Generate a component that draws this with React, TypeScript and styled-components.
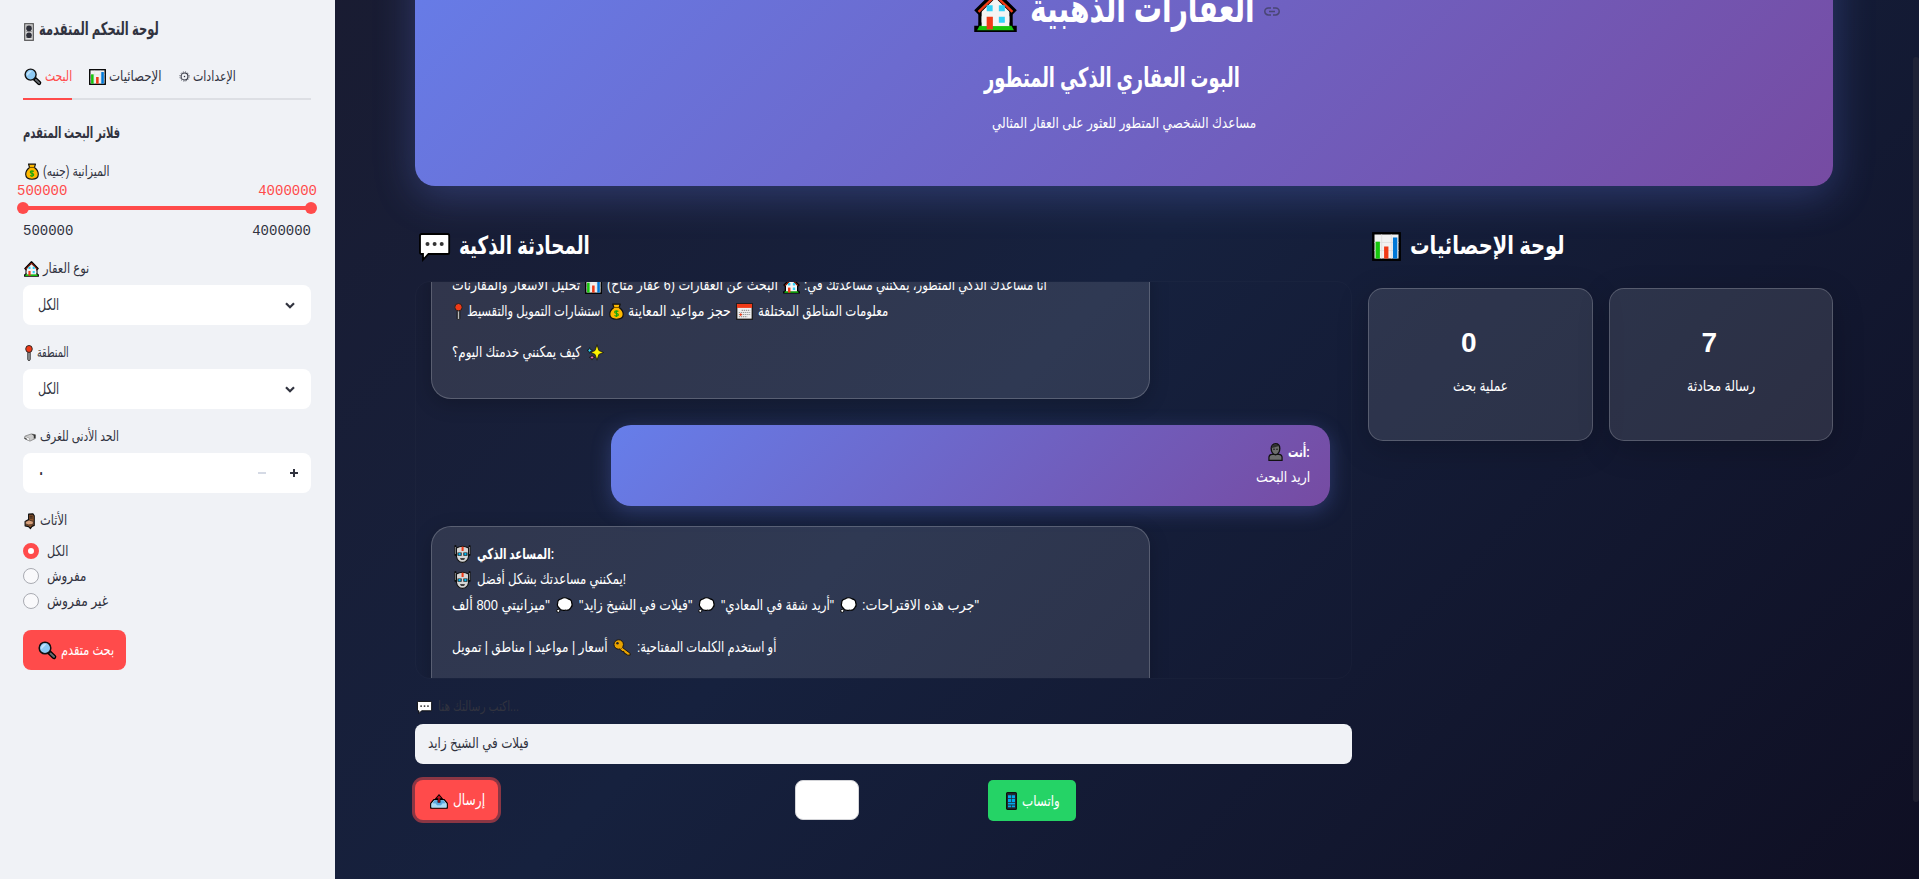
import React, { useLayoutEffect, useRef, useState } from "react";
import styled, { createGlobalStyle, css } from "styled-components";

const Global = createGlobalStyle`
  * { box-sizing: border-box; }
  html, body { margin: 0; padding: 0; overflow: hidden; }
  body { font-family: "Liberation Sans", "DejaVu Sans", sans-serif; color: #31333f; font-size: 14px; }
  h1, h2, h3, p { margin: 0; font-weight: inherit; font-size: inherit; }
`;

const Page = styled.div`
  display: flex;
  width: 1919px;
  height: 879px;
  overflow: hidden;
  background: linear-gradient(135deg, #1a1a2e 0%, #16213e 50%, #0f0f23 100%);
`;

/* ---------- text that occupies an exact width ---------- */
const FitBox = styled.span<{ $w: number; $ml: number; $size: number; $bold?: boolean; $c?: string }>`
  display: block;
  flex: none;
  width: ${(p) => p.$w}px;
  margin-left: ${(p) => p.$ml}px;
  font-size: ${(p) => p.$size}px;
  line-height: 1.2;
  font-weight: ${(p) => (p.$bold ? 700 : 400)};
  ${(p) => p.$c && css`color: ${p.$c};`}
  white-space: nowrap;
`;
const FitInner = styled.span`
  display: inline-block;
  transform-origin: 0 50%;
`;

type FitProps = { w: number; ml?: number; size?: number; bold?: boolean; c?: string; rtl?: boolean; children: string };
function Fit({ w, ml = 0, size = 14, bold, c, rtl, children }: FitProps) {
  const ref = useRef<HTMLSpanElement>(null);
  const [k, setK] = useState(1);
  useLayoutEffect(() => {
    if (ref.current) setK(w / ref.current.offsetWidth);
  }, [w, children]);
  return (
    <FitBox $w={w} $ml={ml} $size={size} $bold={bold} $c={c}>
      <FitInner ref={ref} dir={rtl ? "rtl" : "ltr"} style={{ transform: `scaleX(${k})` }}>{children}</FitInner>
    </FitBox>
  );
}

/* ---------- pictograms ---------- */
type IconName = "knobs" | "search" | "chart" | "gear" | "bag" | "house" | "pin" | "bed" | "chair" | "chat" | "calendar" | "sparkles" | "person" | "robot" | "thought" | "key" | "outbox" | "phone" | "link";

const Svg = styled.svg<{ $ml: number; $mt: number }>`
  display: block;
  flex: none;
  margin-left: ${(p) => p.$ml}px;
  margin-top: ${(p) => p.$mt}px;
  overflow: visible;
`;

const shapes: Record<IconName, [string, React.ReactNode]> = {
  knobs: ["0 0 10 18", <g><rect x=".7" y=".7" width="8.6" height="16.6" fill="#ddd" stroke="#555" strokeWidth="1.2" /><path d="M2 3h6M2 8.6h6M2 14.5h6" stroke="#888" strokeWidth=".8" /><circle cx="5" cy="5.4" r="2.8" fill="#2c2e38" /><circle cx="5" cy="12.2" r="2.8" fill="#2c2e38" /></g>],
  search: ["0 0 18 18", <g><path d="M10.8 10.8L16 15.8" stroke="#000" strokeWidth="4.6" strokeLinecap="round" /><path d="M12.5 12.5L16 15.8" stroke="#666b70" strokeWidth="2" strokeLinecap="round" /><circle cx="7" cy="7" r="5.8" fill="#8dc9f3" stroke="#111" strokeWidth="1.5" /><path d="M3.2 8.4L8.4 3.2A4.3 4.3 0 0 0 3.2 8.4z" fill="#c3e4fb" /></g>],
  chart: ["0 0 18 18", <g><rect x=".8" y=".8" width="16.4" height="16.4" fill="#f2f2f2" stroke="#000" strokeWidth="1.5" /><path d="M1.5 6.5h15M1.5 11.5h15M6 1.5v15M12 1.5v15" stroke="#ddd" strokeWidth=".5" /><rect x="2.2" y="6" width="2.7" height="10.5" fill="#16c60c" /><rect x="7.5" y="9" width="2.7" height="7.5" fill="#f03a17" /><rect x="13" y="3.4" width="2.7" height="13.1" fill="#0078d7" /></g>],
  gear: ["0 0 12 12", <g fill="none" stroke="#31333f"><circle cx="6" cy="6" r="3.7" strokeWidth="1.1" /><circle cx="6" cy="6" r="5" strokeWidth="1" strokeDasharray="1.2 1.42" /><circle cx="6" cy="6" r=".8" fill="#31333f" stroke="none" /></g>],
  bag: ["0 0 16 18", <g><path d="M4 1.2h8l-1.2 3.6C14 7 15.2 10 15.2 12c0 3.4-2.6 5.2-7.2 5.2S.8 15.4.8 12C.8 10 2 7 5.2 4.8z" fill="#ffb900" stroke="#111" strokeWidth="1.3" strokeLinejoin="round" /><path d="M4.8 4.7h6.4" stroke="#6b4b00" strokeWidth="1" /><path d="M10 9c-1-1-4-.9-4 .7s4 .9 4 2.7-3 1.8-4.1.6M8 7.6v7.3" fill="none" stroke="#16a60c" strokeWidth="1.2" /></g>],
  house: ["0 0 18 18", <g><path d="M2.5 8v8h13V8L9 2z" fill="#f4f4f4" stroke="#000" strokeWidth="1.4" /><path d="M1 9.4L9 1.500l8 7.9" fill="none" stroke="#000" strokeWidth="2.6" strokeLinejoin="round" /><path d="M1.9 9.2L9 2.3l7.1 6.900" fill="none" stroke="#f03a17" strokeWidth="1" /><path d="M.1 17.600v-2.600h1.900v-1.400h14v1.400h1.900v2.600z" fill="#000" /><path d="M1.300 16.800l1-1.800h13.400l1 1.800z" fill="#16c60c" /><rect x="3.2" y="11" width="11.6" height="4.100" fill="#f4f4f4" /><path d="M5.300 6.400h2.500v2.500H5.300zM10.400 6.400h2.500v2.500h-2.500zM10.400 11.200h2.500v2.500h-2.500z" fill="#31d2f7" /><rect x="5.300" y="11.200" width="2.600" height="5.300" fill="#f03a17" /></g>],
  pin: ["0 0 9 17", <g><rect x="3.2" y="7" width="2.6" height="9.4" rx="1" fill="#bbb" stroke="#111" strokeWidth="1" /><circle cx="4.5" cy="4.2" r="3.7" fill="#f03a17" stroke="#222" strokeWidth="1" /></g>],
  bed: ["0 0 13 10", <g><path d="M1 3.500L8 1l4.500 1v4L6.500 9 1 6.500z" fill="#ccc" stroke="#777" strokeWidth=".8" /><path d="M8 1.2l4.300.8v3.600L10.600 6.500V3z" fill="#333" /><path d="M1.300 3.800L6 6v2.600L1.300 6.500z" fill="#fff" stroke="#888" strokeWidth=".6" /><path d="M.3 5l3 1.400L3 7.500.3 6.200z" fill="#444" /></g>],
  chair: ["0 0 12 16", <g stroke="#111" strokeLinejoin="round"><path d="M5 1.200L9.800.8l1.400 2v9.600L8.700 13.400 7 15.500 5 13.600 1.200 12.800V8.600L5 6.600z" fill="#8e562e" strokeWidth="1.200" /><path d="M1.500 8.700l4-1.700 5 1.600-1 3-5 .3-3-1.200z" fill="#d9a17c" strokeWidth=".6" /><path d="M6.300 3.200h3.200M6.300 5h3.200" strokeWidth=".8" /></g>],
  chat: ["0 0 31 28", <g><path d="M2.600 1h26q1.600 0 1.600 1.600v16.800q0 1.600-1.600 1.600H9.500L4 26.800V21H2.600Q1 21 1 19.400V2.600Q1 1 2.600 1z" fill="#fff" stroke="#000" strokeWidth="1.800" /><circle cx="8.500" cy="11" r="2" fill="#333" /><circle cx="15.600" cy="11" r="2" fill="#333" /><circle cx="22.700" cy="11" r="2" fill="#333" /></g>],
  calendar: ["0 0 18 18", <g><rect x=".8" y=".8" width="16.400" height="16.400" fill="#eee" stroke="#111" strokeWidth="1.300" /><rect x="1" y="1" width="16" height="4.200" fill="#f03a17" /><path d="M6 7.800h9M3 10h12M3 12.200h12M3 14.400h9" stroke="#999" strokeWidth="1.200" strokeDasharray="1.400 .8" /><path d="M3.500 12.300h3M5 10.800v3" stroke="#f03a17" strokeWidth="1" /></g>],
  sparkles: ["0 0 18 18", <g stroke="#111" strokeWidth=".8" strokeLinejoin="round"><path d="M11 .8l1.900 6.100L17.500 9l-4.600 2L11 17.200 9 11 4.800 9 9 6.900z" fill="#fff100" /><path d="M3.700 3.800l.9 2.200 2 .8-2 .8-.9 2.200-.9-2.200L1 6.800 2.800 6z" fill="#31d2f7" /><path d="M6 11.600l.9 1.900 1.900.7-1.900.8-.9 2-.8-2-1.900-.8 1.900-.7z" fill="#ef6fb0" /></g>],
  person: ["0 0 16 18", <g><path d="M1 17.300v-3q0-2.800 3.600-3h6.800q3.600.2 3.600 3v3z" fill="#6d6d6d" stroke="#111" strokeWidth="1.300" /><path d="M8 .8c3 0 4.600 2 4.600 4.800 0 3.300-2 6.200-4.600 6.200S3.400 8.900 3.400 5.600C3.400 2.800 5 .8 8 .8z" fill="#6d6d6d" stroke="#111" strokeWidth="1.400" /><path d="M3.600 5C4 1.500 9 .5 11.700 3L6.500 4.600z" fill="#2e2e2e" /><circle cx="6.400" cy="6.300" r=".7" /><circle cx="9.600" cy="6.300" r=".7" /></g>],
  robot: ["0 0 18 18", <g><path d="M1.500 1v9M16.500 1v9" stroke="#111" strokeWidth="2.200" strokeLinecap="round" /><path d="M1.500 2v7M16.500 2v7" stroke="#aaa" strokeWidth=".8" /><path d="M2.600 3q6.400-3.500 12.800 0v8.500q-1 5.500-6.400 5.900-5.400-.4-6.400-5.900z" fill="#d5d5d5" stroke="#111" strokeWidth="1.200" /><path d="M8 1.800h2.200V6H8z" fill="#f03a17" /><path d="M3.700 7.400h4.400v3.400H3.700zM9.900 7.400h4.400v3.400H9.900z" fill="#111" /><path d="M4.700 8h2.400v2.200H4.700zM10.900 8h2.400v2.200h-2.400z" fill="#00b7f1" /><path d="M6.300 13.200h5.400l-1 1.500H7.400z" fill="#111" /></g>],
  thought: ["0 0 17 17", <g><path d="M5 2.200Q8.500-.5 12 2q3.700.6 3.700 4 1.400 3-.9 5.400-1.600 3.200-5.600 2.600-3.500 1-5.600-1.800Q.5 9.500 1.700 6.500 1.500 3 5 2.200z" fill="#fff" stroke="#000" strokeWidth="1.200" /><circle cx="2.300" cy="14.700" r="1.600" fill="#fff" stroke="#000" /></g>],
  key: ["0 0 20 18", <g><path d="M8 7.500L18 15.200v1.900h-3l-1-1.300-2-.4-.4-1.900-2-.4L6.500 10z" fill="#e8a200" stroke="#111" strokeWidth="1" strokeLinejoin="round" /><circle cx="6" cy="5.800" r="5" fill="#e8a200" stroke="#111" strokeWidth="1" /><path d="M8 7.500l2 1.600-2.500 2z" fill="#e8a200" /><circle cx="4.700" cy="4.400" r="1.300" fill="#222" /></g>],
  outbox: ["0 0 19 16", <g><path d="M.8 15V10L4 6h11l3.200 4v5z" fill="#e8f4fb" stroke="#000" strokeWidth="1.400" strokeLinejoin="round" /><path d="M1.600 10h4.200l1.600 2.200h4.200L13.200 10h4.200v4.300H1.600z" fill="#a7dbf7" /><path d="M4.500 6.700h10l2 3.300h-3.300l-1.600 2.200H7.400L5.800 10H2.500z" fill="#5aa9df" /><path d="M9.500 9.200V4" stroke="#000" strokeWidth="3" /><path d="M9.500 0L14 5.300H5z" fill="#000" /><path d="M9.500 9V3.500" stroke="#c50f1f" strokeWidth="1.400" /><path d="M9.500 1.500L12 4.500H7z" fill="#c50f1f" /></g>],
  phone: ["0 0 11 18", <g><rect x=".6" y=".6" width="9.800" height="16.800" rx="1" fill="#222c33" stroke="#101010" strokeWidth="1.200" /><path d="M2 3.200h3v3H2zM5.700 3.200h3.300v3H5.700zM2 7h3v3H2zM5.700 7h3.300v3H5.700zM2 10.800h7v1.800H2zM2 13.400h3v1.800H2zM5.700 13.400h3.300v1.800H5.700z" fill="#00a9ec" /></g>],
  link: ["0 0 16 9", <g fill="none" stroke="currentColor" strokeWidth="1.500"><path d="M7 .9H4.300a3.500 3.500 0 0 0 0 7H7M9 .9h2.700a3.500 3.500 0 0 1 0 7H9M5 4.400h6" /></g>],
};

function Icon({ n, w, h, ml = 0, mt = 0 }: { n: IconName; w: number; h: number; ml?: number; mt?: number }) {
  const [vb, body] = shapes[n];
  return <Svg width={w} height={h} viewBox={vb} preserveAspectRatio="none" $ml={ml} $mt={mt} aria-hidden>{body}</Svg>;
}

/* ---------- generic row ---------- */
const Row = styled.div<{ $h: number; $mt?: number; $pl?: number; $justify?: string; $top?: boolean }>`
  display: flex;
  flex: none;
  align-items: ${(p) => (p.$top ? "flex-start" : "center")};
  justify-content: ${(p) => p.$justify || "flex-start"};
  height: ${(p) => p.$h}px;
  margin-top: ${(p) => p.$mt || 0}px;
  padding-left: ${(p) => p.$pl || 0}px;
`;

/* ---------- sidebar ---------- */
const Sidebar = styled.aside`
  display: flex;
  flex-direction: column;
  flex: none;
  width: 335px;
  padding: 18px 24px 0 23px;
  background: #f0f2f6;
`;
const Tabs = styled.nav`
  display: flex;
  flex: none;
  height: 40px;
  margin-top: 18px;
  border-bottom: 2px solid #dddfe4;
`;
const Tab = styled.div<{ $active?: boolean; $w: number; $gap: number }>`
  display: flex;
  align-items: center;
  width: ${(p) => p.$w}px;
  height: 40px;
  margin-right: ${(p) => p.$gap}px;
  padding-bottom: 5px;
  color: ${(p) => (p.$active ? "#ff4b4b" : "#31333f")};
  border-bottom: 2px solid ${(p) => (p.$active ? "#ff4b4b" : "transparent")};
`;
const Mono = styled.div<{ $red?: boolean }>`
  display: flex;
  flex: none;
  justify-content: space-between;
  margin: ${(p) => (p.$red ? "1px -6px 0" : "12px 0 0")};
  height: 18px;
  font: 14px/18px "Liberation Mono", monospace;
  color: ${(p) => (p.$red ? "#ff4b4b" : "#31333f")};
`;
const Track = styled.div`
  display: flex;
  flex: none;
  justify-content: space-between;
  align-items: center;
  height: 4px;
  margin: 6px -6px 0;
  background: linear-gradient(#ff4b4b, #ff4b4b) center / 288px 4px no-repeat;
`;
const Thumb = styled.i`
  width: 12px;
  height: 12px;
  border-radius: 50%;
  background: #ff4b4b;
`;
const Field = styled.div<{ $pr?: number }>`
  display: flex;
  flex: none;
  align-items: center;
  height: 40px;
  margin-top: 7px;
  padding: 0 ${(p) => p.$pr || 16}px 0 15px;
  border-radius: 8px;
  background: #fff;
`;
const Spacer = styled.span`
  flex: 1;
`;
const Radio = styled.i<{ $on?: boolean }>`
  flex: none;
  width: 16px;
  height: 16px;
  border-radius: 50%;
  border: ${(p) => (p.$on ? "5px solid #ff4b4b" : "1px solid #a9abb2")};
  background: ${(p) => (p.$on ? "#fff" : "#f9f9fb")};
`;
const Button = styled.button<{ $w: number; $h?: number; $bg: string; $pl: number; $r?: number; $ml?: number; $ring?: boolean; $line?: boolean }>`
  display: flex;
  flex: none;
  align-items: center;
  width: ${(p) => p.$w}px;
  height: ${(p) => p.$h || 40}px;
  margin: 0 0 0 ${(p) => p.$ml || 0}px;
  padding: 0 0 0 ${(p) => p.$pl}px;
  border: ${(p) => (p.$line ? "1px solid #d3d4d8" : "0")};
  border-radius: ${(p) => p.$r || 8}px;
  background: ${(p) => p.$bg};
  box-shadow: ${(p) => (p.$ring ? "0 0 0 3px rgba(255, 75, 75, 0.5)" : "none")};
  color: #fff;
  font-family: inherit;
`;
const Chevron = () => (
  <Svg width={10} height={7} viewBox="0 0 10 7" $ml={0} $mt={0}><path d="M1 1.200l4 4 4-4" fill="none" stroke="#31333f" strokeWidth="2.200" /></Svg>
);

/* ---------- main ---------- */
const Main = styled.main`
  display: flex;
  flex-direction: column;
  flex: 1;
  padding: 0 80px;
  overflow: hidden;
`;
const Hero = styled.header`
  display: flex;
  flex-direction: column;
  flex: none;
  height: 272px;
  margin-top: -86px;
  padding-top: 66px;
  border-radius: 20px;
  background: linear-gradient(135deg, #667eea 0%, #764ba2 100%);
  box-shadow: 0 10px 40px rgba(102, 126, 234, 0.3);
  color: #fff;
`;
const LinkWrap = styled.span`
  display: flex;
  color: rgba(49, 51, 63, 0.6);
`;
const Columns = styled.div`
  display: flex;
  gap: 16px;
`;
const ChatCol = styled.section`
  display: flex;
  flex-direction: column;
  width: 937px;
  color: #fff;
`;
const StatCol = styled.section`
  width: 465px;
  color: #fff;
`;
const ChatBox = styled.div`
  display: flex;
  flex-direction: column;
  flex: none;
  height: 398px;
  margin-top: 18px;
  padding: 0 21px 0 15px;
  border: 1px solid rgba(255, 255, 255, 0.02);
  border-radius: 15px;
  overflow: hidden;
`;
const Bubble = styled.div<{ $user?: boolean; $h: number; $mt: number; $pt: number }>`
  display: flex;
  flex-direction: column;
  flex: none;
  align-self: ${(p) => (p.$user ? "flex-end" : "flex-start")};
  width: 719px;
  height: ${(p) => p.$h}px;
  margin-top: ${(p) => p.$mt}px;
  padding: ${(p) => p.$pt}px 20px 0;
  border-radius: 20px;
  ${(p) =>
    p.$user
      ? css`
          background: linear-gradient(135deg, #667eea 0%, #764ba2 100%);
          box-shadow: 0 5px 20px rgba(102, 126, 234, 0.3);
        `
      : css`
          border: 1px solid rgba(255, 255, 255, 0.2);
          background: rgba(255, 255, 255, 0.11);
          box-shadow: 0 5px 20px rgba(0, 0, 0, 0.2);
        `}
`;
const Input = styled.div`
  display: flex;
  flex: none;
  align-items: center;
  height: 40px;
  margin-top: 8px;
  padding: 0 0 2px 13px;
  border-radius: 8px;
  background: #f0f2f6;
  color: #31333f;
`;
const Cards = styled.div`
  display: flex;
  gap: 16px;
  margin-top: 25px;
`;
const Card = styled.div`
  display: flex;
  flex-direction: column;
  align-items: center;
  width: 224.5px;
  height: 153px;
  padding-top: 34px;
  border: 1px solid rgba(255, 255, 255, 0.2);
  border-radius: 15px;
  background: rgba(255, 255, 255, 0.11);
  box-shadow: 0 8px 32px rgba(0, 0, 0, 0.2);
`;
const Figure = styled.strong`
  height: 40px;
  margin-right: 23px;
  font: 700 28px/40px "Liberation Sans", sans-serif;
`;
const Scroll = styled.div`
  flex: none;
  width: 6px;
  height: 879px;
  padding-top: 57px;
`;
const ScrollThumb = styled.div`
  height: 745px;
  border-radius: 3px;
  background: rgba(49, 51, 63, 0.4);
`;

export default function App() {
  return (
    <Page>
      <Global />
      <Sidebar>
        <Row $h={24}><Icon n="knobs" w={10} h={18} ml={1} mt={3} /><Fit w={120} ml={5} size={18} bold rtl>لوحة التحكم المتقدمة</Fit></Row>
        <Tabs>
          <Tab $active $w={49} $gap={16}><Icon n="search" w={17} h={17} ml={1} /><Fit w={27} ml={4} rtl>البحث</Fit></Tab>
          <Tab $w={75} $gap={16}><Icon n="chart" w={17} h={16} ml={1} /><Fit w={53} ml={3} rtl>الإحصائيات</Fit></Tab>
          <Tab $w={60} $gap={0}><Icon n="gear" w={11} h={11} /><Fit w={43} ml={3} rtl>الإعدادات</Fit></Tab>
        </Tabs>
        <Row $h={24} $mt={21}><Fit w={97} size={16} bold rtl>فلاتر البحث المتقدم</Fit></Row>
        <Row $h={20} $mt={16}><Icon n="bag" w={14} h={17} ml={2} /><Fit w={67} ml={4} rtl>الميزانية (جنيه)</Fit></Row>
        <Mono $red><span>500000</span><span>4000000</span></Mono>
        <Track><Thumb /><Thumb /></Track>
        <Mono><span>500000</span><span>4000000</span></Mono>
        <Row $h={20} $mt={18}><Icon n="house" w={15} h={16} ml={1} mt={1} /><Fit w={46} ml={4} rtl>نوع العقار</Fit></Row>
        <Field><Fit w={21} size={16} rtl>الكل</Fit><Spacer /><Chevron /></Field>
        <Row $h={20} $mt={17}><Icon n="pin" w={8} h={16} ml={2} mt={1} /><Fit w={32} ml={4} rtl>المنطقة</Fit></Row>
        <Field><Fit w={21} size={16} rtl>الكل</Fit><Spacer /><Chevron /></Field>
        <Row $h={20} $mt={17}><Icon n="bed" w={12} h={9} ml={1} mt={3} /><Fit w={79} ml={4} rtl>الحد الأدنى للغرف</Fit></Row>
        <Field $pr={13}><Fit w={6} size={17} bold rtl>٠</Fit><Spacer />
          <svg width="40" height="8" viewBox="0 0 40 8"><path d="M0 4h8" stroke="#d5dae5" strokeWidth="2" /><path d="M32 4h8M36 0v8" stroke="#31333f" strokeWidth="2" /></svg>
        </Field>
        <Row $h={20} $mt={17}><Icon n="chair" w={11} h={16} ml={1} mt={1} /><Fit w={27} ml={5} rtl>الأثاث</Fit></Row>
        <Row $h={25} $mt={8}><Radio $on /><Fit w={21} ml={8} size={15} rtl>الكل</Fit></Row>
        <Row $h={25}><Radio /><Fit w={39} ml={8} size={15} rtl>مفروش</Fit></Row>
        <Row $h={26}><Radio /><Fit w={61} ml={8} size={15} rtl>غير مفروش</Fit></Row>
        <Row $h={40} $mt={16}>
          <Button $w={103} $bg="#ff4b4b" $pl={15}><Icon n="search" w={18} h={18} /><Fit w={53} ml={5} size={15} rtl>بحث متقدم</Fit></Button>
        </Row>
      </Sidebar>

      <Main>
        <Hero>
          <Row $h={56} $pl={559}>
            <Icon n="house" w={43} h={43} mt={7} />
            <Fit w={225} ml={13} size={40} bold rtl>العقارات الذهبية</Fit>
            <LinkWrap><Icon n="link" w={16} h={9} ml={9} mt={7} /></LinkWrap>
          </Row>
          <Row $h={36} $mt={24} $pl={569}><Fit w={256} size={27} bold rtl>البوت العقاري الذكي المتطور</Fit></Row>
          <Row $h={24} $mt={15} $pl={577}><Fit w={264} size={15} rtl>مساعدك الشخصي المتطور للعثور على العقار المثالي</Fit></Row>
        </Hero>

        <Columns>
          <ChatCol>
            <Row $h={36} $mt={41} $pl={4}><Icon n="chat" w={31} h={28} mt={3} /><Fit w={131} ml={9} size={25} bold rtl>المحادثة الذكية</Fit></Row>
            <ChatBox>
              <Bubble $h={138} $mt={-21} $pt={10}>
                <Row $h={26}>
                  <Fit w={128} size={15} rtl>تحليل الأسعار والمقارنات</Fit><Icon n="chart" w={17} h={17} ml={5} />
                  <Fit w={171} ml={5} size={15} rtl>البحث عن العقارات (6 عقار متاح)</Fit><Icon n="house" w={17} h={17} ml={5} />
                  <Fit w={243} ml={4} size={15} rtl>أنا مساعدك الذكي المتطور، يمكنني مساعدتك في:</Fit>
                </Row>
                <Row $h={26}>
                  <Icon n="pin" w={9} h={17} ml={2} /><Fit w={137} ml={4} size={15} rtl>استشارات التمويل والتقسيط</Fit>
                  <Icon n="bag" w={15} h={17} ml={5} /><Fit w={103} ml={4} size={15} rtl>حجز مواعيد المعاينة</Fit>
                  <Icon n="calendar" w={17} h={17} ml={5} /><Fit w={130} ml={5} size={15} rtl>معلومات المناطق المختلفة</Fit>
                </Row>
                <Row $h={26} $mt={15}><Fit w={129} size={15} rtl>كيف يمكنني خدمتك اليوم؟</Fit><Icon n="sparkles" w={18} h={17} ml={5} mt={1} /></Row>
              </Bubble>
              <Bubble $user $h={81} $mt={26} $pt={14}>
                <Row $h={25} $justify="flex-end"><Icon n="person" w={15} h={18} /><Fit w={22} ml={5} size={15} bold>أنت:</Fit></Row>
                <Row $h={25} $justify="flex-end"><Fit w={54} size={15} rtl>اريد البحث</Fit></Row>
              </Bubble>
              <Bubble $h={200} $mt={20} $pt={14}>
                <Row $h={25}><Icon n="robot" w={17} h={18} ml={2} mt={1} /><Fit w={77} ml={6} size={15} bold>المساعد الذكي:</Fit></Row>
                <Row $h={26}><Icon n="robot" w={17} h={18} ml={2} mt={1} /><Fit w={149} ml={6} size={15}>يمكنني مساعدتك بشكل أفضل!</Fit></Row>
                <Row $h={26}>
                  <Fit w={98} size={15} rtl>"ميزانيتي 800 ألف</Fit><Icon n="thought" w={17} h={16} ml={6} />
                  <Fit w={113} ml={6} size={15} rtl>"فيلات في الشيخ زايد"</Fit><Icon n="thought" w={17} h={16} ml={6} />
                  <Fit w={113} ml={6} size={15} rtl>"أريد شقة في المعادي"</Fit><Icon n="thought" w={17} h={16} ml={6} />
                  <Fit w={117} ml={5} size={15} rtl>"جرب هذه الاقتراحات:</Fit>
                </Row>
                <Row $h={26} $mt={16}><Fit w={156} size={15} rtl>أسعار | مواعيد | مناطق | تمويل</Fit><Icon n="key" w={19} h={17} ml={5} /><Fit w={139} ml={5} size={15} rtl>أو استخدم الكلمات المفتاحية:</Fit></Row>
              </Bubble>
            </ChatBox>
            <Row $h={20} $mt={17} $pl={2}><Icon n="chat" w={15} h={13} mt={2} /><Fit w={81} ml={6} c="#31333f">اكتب رسالتك هنا...</Fit></Row>
            <Input><Fit w={101} size={15} rtl>فيلات في الشيخ زايد</Fit></Input>
            <Row $h={41} $mt={16} $top>
              <Button $w={83} $bg="#ff4b4b" $pl={15} $ring><Icon n="outbox" w={18} h={15} mt={2} /><Fit w={32} ml={5} size={16} rtl>إرسال</Fit></Button>
              <Button $w={64} $bg="#fff" $pl={0} $ml={297} $line />
              <Button $w={88} $h={41} $bg="#25d366" $pl={18} $r={5} $ml={129}><Icon n="phone" w={11} h={18} /><Fit w={38} ml={5} size={15} rtl>واتساب</Fit></Button>
            </Row>
          </ChatCol>
          <StatCol>
            <Row $h={36} $mt={41} $pl={4}><Icon n="chart" w={29} h={29} mt={3} /><Fit w={155} ml={9} size={25} bold rtl>لوحة الإحصائيات</Fit></Row>
            <Cards>
              <Card><Figure>0</Figure><Row $h={26} $mt={10}><Fit w={55} size={15} rtl>عملية بحث</Fit></Row></Card>
              <Card><Figure>7</Figure><Row $h={26} $mt={10}><Fit w={68} size={15} rtl>رسالة محادثة</Fit></Row></Card>
            </Cards>
          </StatCol>
        </Columns>
      </Main>
      <Scroll><ScrollThumb /></Scroll>
    </Page>
  );
}
